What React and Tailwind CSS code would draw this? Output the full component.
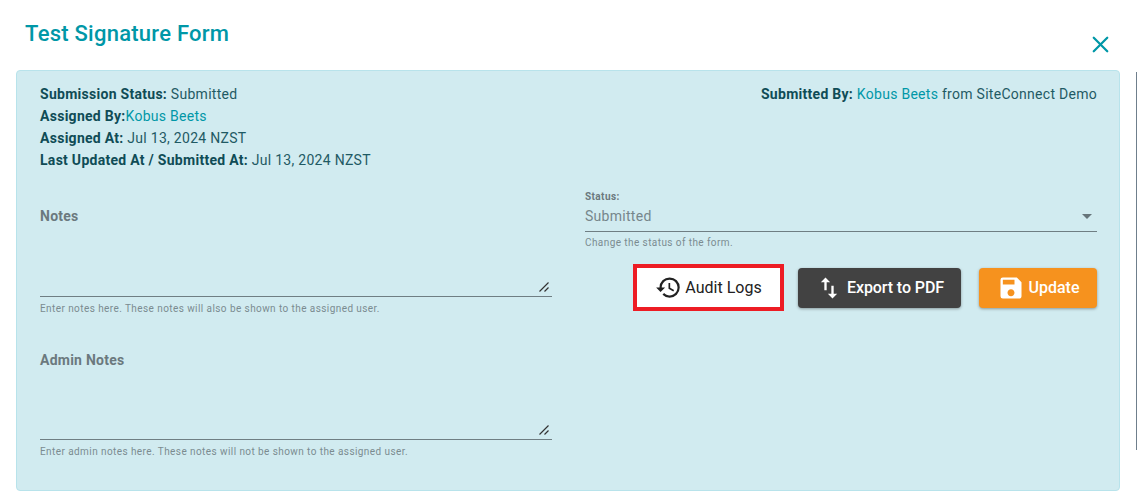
import { X } from 'lucide-react'

function HistoryIcon() {
  return (
    <svg viewBox="0 0 24 24" className="w-[27px] h-[27px] fill-[#212121]">
      <path d="M13 3a9 9 0 0 0-9 9H1l3.89 3.89.07.14L9 12H6c0-3.87 3.13-7 7-7s7 3.13 7 7-3.13 7-7 7c-1.93 0-3.68-.79-4.94-2.06l-1.42 1.42A8.954 8.954 0 0 0 13 21a9 9 0 0 0 0-18zm-1 5v5l4.28 2.54.72-1.21-3.5-2.08V8H12z" />
    </svg>
  )
}

function SwapIcon() {
  return (
    <svg viewBox="0 0 24 24" className="w-[28px] h-[28px] fill-white">
      <path d="M16 17.01V10h-2v7.01h-3L15 21l4-3.99h-3zM9 3 5 6.99h3V14h2V6.99h3L9 3z" />
    </svg>
  )
}

function SaveIcon() {
  return (
    <svg viewBox="0 0 24 24" className="w-[28px] h-[28px] fill-white">
      <path d="M17 3H5a2 2 0 0 0-2 2v14a2 2 0 0 0 2 2h14c1.1 0 2-.9 2-2V7l-4-4zm-5 16c-1.66 0-3-1.34-3-3s1.34-3 3-3 3 1.34 3 3-1.34 3-3 3zm3-10H5V5h10v4z" />
    </svg>
  )
}

function ResizeGrip() {
  return (
    <svg viewBox="0 0 10 10" className="absolute right-[3px] bottom-[4px] w-[10px] h-[10px] stroke-[#333]" fill="none">
      <path d="M0.5 9.5 9.5 0.5M5.5 9.5l4-4" strokeWidth="1.2" />
    </svg>
  )
}

function NotesField({ label, hint, boxClass }) {
  return (
    <div>
      <div className="text-sm font-bold leading-[22px] tracking-[0.25px] text-[#6b797e]">{label}</div>
      <div className={`relative border-b border-[#6f7e83] ${boxClass}`}>
        <ResizeGrip />
      </div>
      <div className="mt-[5px] text-[10px] leading-[14px] tracking-[0.42px] text-[#7b8b90]">{hint}</div>
    </div>
  )
}

export default function App() {
  return (
    <div className="h-[503px] bg-white overflow-hidden font-['Roboto',sans-serif]">
      {/* Header */}
      <div className="flex justify-between h-[70px] pl-[25px] pr-[23px]">
        <h1 className="mt-[19px] text-[22px] leading-[30px] font-medium tracking-[0.25px] text-[#0097a7]">Test Signature Form</h1>
        <X className="mt-[31px] w-[27px] h-[27px] text-[#0097a7]" strokeWidth={2} />
      </div>

      <div className="flex justify-between items-start">
        {/* Panel */}
        <div className="ml-4 w-[1104px] h-[421px] rounded border border-[#b8e3eb] bg-[#d1ebf0] pt-[12px] pl-[23px] pr-[22px] text-sm tracking-[0.28px] text-[#1f5a64]">
          <div className="flex justify-between leading-[22px]">
            <div>
              <div><b className="font-bold text-[#0f4c56]">Submission Status:</b> Submitted</div>
              <div><b className="font-bold text-[#0f4c56]">Assigned By:</b><span className="text-[#0097a7]">Kobus Beets</span></div>
              <div><b className="font-bold text-[#0f4c56]">Assigned At:</b> Jul 13, 2024 NZST</div>
              <div><b className="font-bold text-[#0f4c56]">Last Updated At / Submitted At:</b> Jul 13, 2024 NZST</div>
            </div>
            <div>
              <b className="font-bold text-[#0f4c56]">Submitted By:</b> <span className="text-[#0097a7]">Kobus Beets</span> from SiteConnect Demo
            </div>
          </div>

          <div className="flex justify-between mt-[19px]">
            {/* Notes columns */}
            <div className="w-[512px] pt-[15px] flex flex-col gap-[33px]">
              <NotesField label="Notes" boxClass="h-[70px]" hint="Enter notes here. These notes will also be shown to the assigned user." />
              <NotesField label="Admin Notes" boxClass="h-[69px]" hint="Enter admin notes here. These notes will not be shown to the assigned user." />
            </div>

            <div className="w-[512px]">
              {/* Status select */}
              <div className="text-[10px] leading-[14px] font-bold tracking-[0.4px] text-[#6b797e]">Status:</div>
              <div className="flex items-center justify-between h-[28px] pb-[3px] border-b border-[#6f7e83] text-sm text-[#76868b]">
                <span>Submitted</span>
                <svg viewBox="0 0 10 5" className="w-[10px] h-[5px] mr-[5px] fill-[#66757a]"><path d="M0 0h10L5 5z" /></svg>
              </div>
              <div className="mt-[4px] text-[10px] leading-[14px] tracking-[0.42px] text-[#7b8b90]">Change the status of the form.</div>

              {/* Actions */}
              <div className="flex justify-end items-center mt-[14px] text-base tracking-normal">
                <button className="flex items-center justify-center gap-[3px] w-[151px] h-[47px] border-4 border-[#ed1c24] bg-white text-[#212121]">
                  <HistoryIcon />
                  Audit Logs
                </button>
                <button className="flex items-center justify-center gap-[4px] ml-[14px] w-[163px] h-[40px] rounded bg-[#424242] text-white font-medium shadow-[0_1px_3px_rgba(0,0,0,0.35)]">
                  <SwapIcon />
                  <span className="tracking-[-0.1px]">Export to PDF</span>
                </button>
                <button className="flex items-center justify-center gap-[4px] ml-[18px] w-[118px] h-[40px] rounded bg-[#f6921e] text-white font-medium shadow-[0_1px_3px_rgba(0,0,0,0.35)]">
                  <SaveIcon />
                  Update
                </button>
              </div>
            </div>
          </div>
        </div>

        {/* Scrollbar edge */}
        <div className="mt-[2px] w-[1px] h-[378px] bg-[#6f7f8c]" />
      </div>
    </div>
  )
}
